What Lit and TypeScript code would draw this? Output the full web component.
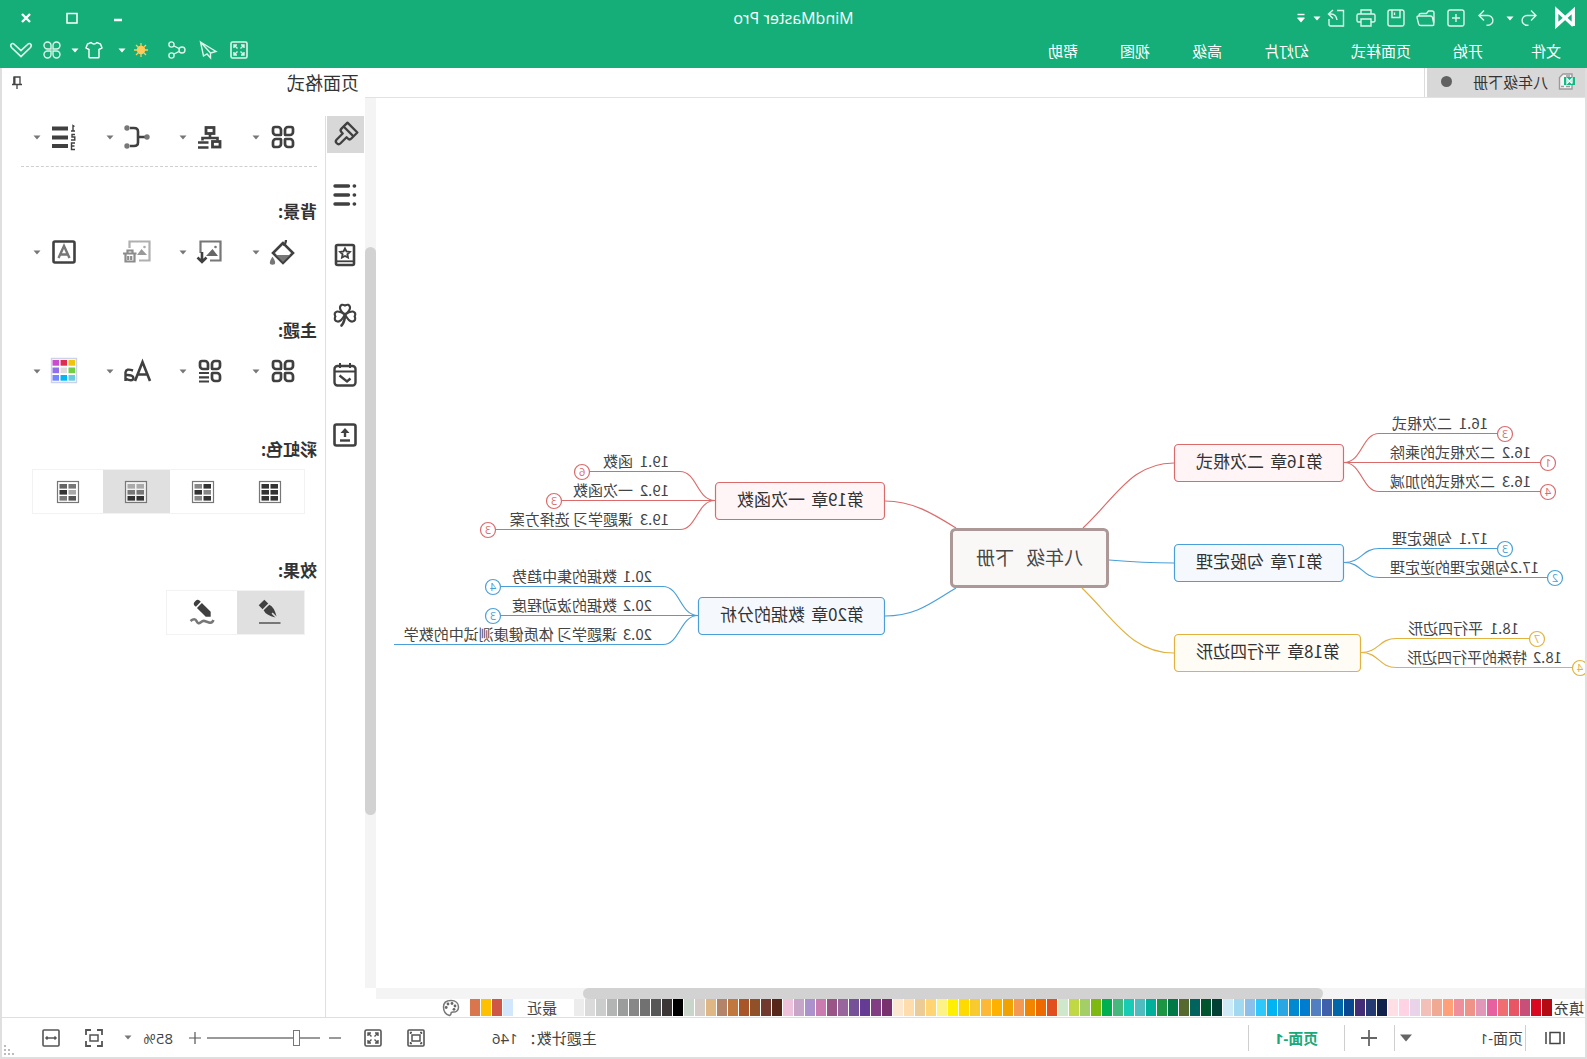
import { LitElement, html, svg, css } from "lit";
import { customElement, state } from "lit/decorators.js";
import { classMap } from "lit/directives/class-map.js";
import { styleMap } from "lit/directives/style-map.js";

const FILL_COLORS = `b40a14 d80920 c84f77 e85665 ee6e71 e761a0 e097b8 ef9388 ef8f9b ffa078
f0aa94 f3bfb9 e9d3e8 ffd2e4 ffdee4 10214b 253a72 432c78 084890 0068a8
3f61ac 527fc2 007dcf 0089d0 2aa6e3 00b4f3 2fc8fb 8cc0eb a0d9f0 cdeaf6
023f34 00552f 00635e 56692f 007946 1d9643 00b09a 51bcc0 17cbb5 47b87d
00b050 7eb90f a4cf66 bfd844 cfe8cb e14f1f ed6a00 f28500 f39951 f0a300
ffb100 fdb836 f9c930 ffda00 ffef00 fdf285 ffd473 ebcc97 ffdcab fce8d0
793170 823e83 643c93 755197 98659c 9a5587 ca7baf ab92cd c7a5c8 edc2da
57271a 723a2f 925028 a85527 c0783e b3846a dfb785 d5cbc6 c9d4cb 000000
3d3636 585757 717171 878787 9b9d9c b2b5b3 cbcccc dadada ececec`.split(/\s+/);
const RECENT_COLORS = ["d2e7fb", "cf5748", "ffc000", "d9764d"];

/* ---------- icons ---------- */

const leafSquare = (x: number, y: number, tl: number, tr: number, br: number, bl: number, s = 8) => {
  return `M${x + tl} ${y}H${x + s - tr}${tr ? `a${tr} ${tr} 0 0 1 ${tr} ${tr}` : ""}V${y + s - br}${br ? `a${br} ${br} 0 0 1 ${-br} ${br}` : ""}H${x + bl}${bl ? `a${bl} ${bl} 0 0 1 ${-bl} ${-bl}` : ""}V${y + tl}${tl ? `a${tl} ${tl} 0 0 1 ${tl} ${-tl}` : ""}Z`;
};
const fourLeaves = [
  leafSquare(2, 2, 2, 3, 0.5, 3),
  leafSquare(14, 2, 3, 2, 3, 0.5),
  leafSquare(2, 14, 3, 0.5, 3, 2),
  leafSquare(14, 14, 0.5, 3, 2, 3),
];
const cells = (c: string[]) =>
  svg`<rect x="1.500" y="1.500" width="21" height="21" fill="#fff" fill-opacity=".5" stroke="#777" stroke-width="1.200"/>
  ${c.map((f, i) => svg`<rect x=${i % 2 ? 13 : 4} y=${4 + Math.floor(i / 2) * 6} width="7.500" height="4.600" fill=${f} stroke="none"/>`)}`;
const SWATCH9 = ["f0c40c", "dc2e55", "c94bce", "70cf44", "dcdcdc", "8f70ea", "68cbe0", "00b6f5", "7486ff"];

const ICONS: Record<string, [number, number, unknown]> = {
  logo: [20, 18, svg`<path d="M1.700 17V1.500L18.300 16.500V1L1.700 16.500" fill="none" stroke="#fff" stroke-width="3.300"/>`],
  undo: [16, 16, svg`<path d="M6 .5 1 5.500l5 5M1.500 5.500h8.500a4.900 4.900 0 0 1 0 9.800H8.500"/>`],
  redo: [16, 16, svg`<path d="M10 .5l5 5-5 5M14.500 5.500H6a4.900 4.900 0 0 0 0 9.800h1.500"/>`],
  newFile: [18, 18, svg`<rect x="1" y="1" width="16" height="16" rx="2"/><path d="M9 5v8M5 9h8"/>`],
  open: [20, 18, svg`<path d="M2 14V4q0-2 2-2h3.500l2 2.500H15q2 0 2 2V7M2 15.500 3.500 8.500Q4 7 5.500 7H17.500q1.800 0 1.400 1.800l-1.500 6Q17 16.500 15 16.500H3.500Q2 16.500 2 15"/>`],
  save: [18, 18, svg`<rect x="1" y="1" width="16" height="16" rx="2"/><path d="M5 1v7.500h8V1M10.500 3.500v2.500"/>`],
  print: [20, 18, svg`<path d="M5 5V1h10v4M5 13H2.500Q1 13 1 11.500V6.500Q1 5 2.500 5h15Q19 5 19 6.500v5q0 1.500-1.500 1.500H15M5 10h10v7H5z"/>`],
  share: [18, 18, svg`<path d="M8 1.500H1.500v15.500h13q1.500 0 1.500-2v-5M12 1l4.500 4L12 9.500M16 5h-2q-5 0-6 6"/>`],
  caret: [8, 5, svg`<path d="M0.500 0.500h7L4 4.500z" fill="currentColor" stroke="none"/>`],
  overflow: [8, 10, svg`<path d="M.5 1.500h7" stroke-width="1.400"/><path d="M.5 4.500h7v1L4 9.500.5 5.500z" fill="currentColor" stroke="none"/>`],
  min: [10, 10, svg`<path d="M1 7h8" stroke-width="2.500"/>`],
  max: [12, 12, svg`<path d="M1 1.500h10V11H1z" stroke-width="1.500"/>`],
  close: [12, 12, svg`<path d="M2 2l8 8M10 2l-8 8" stroke-width="2.400"/>`],
  full: [18, 18, svg`<rect x="1" y="1" width="16" height="16" rx="1.500" stroke-width="1.600"/><path d="M4 7V4h3M11 4h3v3M14 11v3h-3M7 14H4v-3M4 4l3.500 3.500M14 4l-3.500 3.500M14 14l-3.500-3.500M4 14l3.500-3.500"/>`],
  plane: [18, 18, svg`<path d="M16.500 1 1 10.500l5.500 1.500v5l3.500-4 3.500 2zM16.500 1 6.500 12"/>`],
  nodes: [18, 18, svg`<circle cx="4" cy="9" r="3"/><circle cx="14.500" cy="3.500" r="2.600"/><circle cx="14.500" cy="14.500" r="2.600"/><path d="M6.700 7.700 12 5M6.700 10.300 12 13"/>`],
  sun: [16, 16, svg`<circle cx="8" cy="8" r="4.200" fill="#ffcb5c" stroke="none"/><path d="M8 1v14M1 8h14M3 3l10 10M13 3 3 13" stroke="#ffcb5c" stroke-width="1.300"/>`],
  shirt: [18, 18, svg`<path d="M6 1.500Q9 4.500 12 1.500L15.500 3l1.500 4-3 1.500V16q0 .8-.8.8H4.800Q4 16.800 4 16V8.500L1 7l1.500-4z"/>`],
  petals: [18, 18, svg`<path d="M8 8H4.500A3.500 3.500 0 1 1 8 4.500zM10 8V4.500A3.500 3.500 0 1 1 13.500 8zM8 10v3.500A3.500 3.500 0 1 1 4.500 10zM10 10h3.500a3.500 3.500 0 1 1-3.500 3.500z"/>`],
  chevron: [24, 16, svg`<path d="M2 2.500Q3.500.5 5.500 2.500L12 8.500 18.500 2.500Q20.500.5 22 2.500 22.800 4 21.500 5.500L12 14.500 2.500 5.500Q1.200 4 2 2.500z" stroke-width="1.700"/>`],
  doc: [16, 17, svg`<path d="M3 1h9L15.500 4.500V16H3z" fill="#f4f4f4" stroke="#9a9a9a"/><path d="M5 13.500h4M11 13.500h3M5 3h4" stroke="#9a9a9a"/><path d="M0 4h11v8H0z" fill="#12b886" stroke="none"/><path d="M3 10.500V5.500l5 5v-5l-5 5" stroke="#fff" stroke-width="1.300"/>`],
  pin: [10, 14, svg`<path d="M2 8V1h6v7M0 8.500h10M5 9v4" stroke-width="1.300"/><path d="M7.500 1v7" stroke-width="2"/>`],
  brush: [26, 26, svg`<g transform="rotate(-45 13 13)" stroke-width="2.300"><path d="M6 2.500h14V11q0 2.500-2.500 2.500h-1.800V22a2.700 2.700 0 0 1-5.400 0v-8.500H8.500Q6 13.500 6 11z" stroke-linejoin="round"/><path d="M6 8h14"/></g>`],
  list: [24, 24, svg`<path d="M8.500 3H22M8.500 12H22M8.500 21H22" stroke-width="3.400" stroke-linecap="round"/><path d="M2.500 3h.2M2.500 12h.2M2.500 21h.2" stroke-width="3.600" stroke-linecap="round"/>`],
  album: [22, 24, svg`<rect x="2" y="2" width="18" height="20" rx="1.500" stroke-width="2.600"/><path d="M2 18.300h18" stroke-width="1.800"/><path d="M11 5.500l1.500 3 3.300.5-2.400 2.300.6 3.300L11 13l-3 1.600.6-3.300L6.200 9l3.300-.5z" stroke-width="1.900"/>`],
  clover: [24, 24, svg`<path d="M12 11.500Q6.500 7.500 7 4 8 .5 12 2.500 16 .5 17 4q.5 3.500-5 7.500zM12 11.500Q8 19 4.500 18.500.5 17.500 2.300 13.500.5 9.500 4.200 8.500q3.300-.3 7.800 3zM12 11.500q4 7.500 7.500 7Q23.500 17.500 21.700 13.500q1.800-4-1.900-5-3.300-.3-7.800 3z" stroke-width="2.200"/><path d="M12 11q0 8 3.500 11.500" stroke-width="2.600" stroke-linecap="round"/>`],
  calendar: [24, 24, svg`<rect x="1.500" y="3" width="21" height="19.500" rx="3" stroke-width="2.400"/><path d="M2 8.500h20" stroke-width="2"/><path d="M7 0v5M17 0v5" stroke-width="2"/><path d="M17.500 12.500 10 18.500 6.500 15.500" stroke-width="2.400"/>`],
  upload: [24, 24, svg`<rect x="1.500" y="1.500" width="21" height="21" rx="2" stroke-width="2.600"/><path d="M7 17.500h10" stroke-width="2.400"/><path d="M12 14V9" stroke-width="2.400"/><path d="M12 5l4.500 5h-9z" fill="currentColor" stroke="none"/>`],
  leaves: [24, 24, svg`${fourLeaves.map((d) => svg`<path d=${d} stroke-width="2.700"/>`)}`],
  themeList: [24, 24, svg`${fourLeaves.slice(0, 3).map((d) => svg`<path d=${d} stroke-width="2.700"/>`)}<path d="M13 14h10M13 18.300h10M13 22.500h10" stroke-width="2.200"/>`],
  orgchart: [24, 24, svg`<rect x="8" y="2.500" width="8" height="6" stroke-width="2.800"/><path d="M12 9v4M4.500 15.500v-2.500h15v2.500" stroke-width="2.600"/><rect x="2" y="16.500" width="7.500" height="5.500" stroke-width="2.800"/><path d="M13.500 17.500H24M13.500 22.500H24" stroke-width="2.400"/>`],
  bracket: [26, 24, svg`<path d="M4 12h7M20 3h-4q-4 0-4 3.500v11q0 3.500 4 3.500h4" stroke-width="2.600"/><g fill="#777" stroke="none"><circle cx="3" cy="12" r="2.700"/><circle cx="23" cy="3" r="2.700"/><circle cx="23" cy="21" r="2.700"/></g>`],
  numbered: [24, 26, svg`<path d="M8 4.500h16M8 13.500h16M8 22h16" stroke-width="3.800"/><path d="M1.500 2.500 3 1.500V7M1 7h4M1 10.500h3v2.500H1.200v3H5M1 19h3.500v6.500H1M1.500 22h3" stroke-width="1.400"/>`],
  bucket: [25, 25, svg`<path d="M12 3 22 13 12 23 2 13z" stroke-width="2.600"/><path d="M9 0q0 4 3 5" stroke-width="2.200"/><path d="M5 15h14l-7 7z" fill="#777" stroke="none"/><path d="M22.500 18q4 6 0 6t0-6z" fill="#777" stroke="#777"/>`],
  imageIn: [25, 24, svg`<path d="M12 20.500H1.500v-19h20V13" stroke="#777" stroke-width="2.200"/><path d="M4 16l5.500-7L16 16z" fill="#666" stroke="none"/><circle cx="6.500" cy="7" r="1.300" fill="#777" stroke="none"/><path d="M20 12v9M15.500 17.500 20 22l4.500-4.500" stroke-width="2.600"/>`],
  imageDel: [28, 24, svg`<path d="M12 20.500H1.500v-19h20V8" stroke="#b0b0b0" stroke-width="2.200"/><path d="M4 15l5.500-6L14 15z" fill="#999" stroke="none"/><circle cx="6.500" cy="7" r="1.300" fill="#aaa" stroke="none"/><path d="M14.500 13.500H28M18.500 13v-2.500h5V13M16.500 14v7.500h9V14M19.800 16v4M22.800 16v4" stroke="#8c8c8c" stroke-width="2.200"/>`],
  letterBox: [24, 24, svg`<rect x="1.500" y="1.500" width="21" height="21" rx="1.500" stroke-width="2.600"/><path d="M6.500 18 12 6l5.500 12M8.500 14.500h7" stroke="#777" stroke-width="2.400"/>`],
  font: [28, 22, svg`<path d="M1 21 8.500 2 16 21M3.800 14.500h9.500" stroke-width="2.600"/><path d="M18 10.500q7-2.500 7.500 2V21M25.500 15q-8-.5-8 3.200 1 4 8 .3" stroke-width="2.400"/>`],
  colors: [26, 26, svg`<path d="M.5.5h25v24H.5z" fill="#fff" stroke="#ccd3e8"/>${SWATCH9.map((c, i) => svg`<rect x=${2 + (i % 3) * 8} y=${2 + Math.floor(i / 3) * 7.5} width="6.500" height="5.700" fill=${"#" + c} stroke="none"/>`)}`],
  rain1: [24, 24, cells(["#333", "#333", "#333", "#333", "#333", "#333"])],
  rain2: [24, 24, cells(["#333", "#888", "#888", "#333", "#333", "#888"])],
  rain3: [24, 24, cells(["#aaa", "#aaa", "#777", "#777", "#333", "#333"])],
  rain4: [24, 24, cells(["#777", "#666", "#aaa", "#333", "#555", "#777"])],
  pen: [24, 24, svg`<g fill="currentColor" stroke="none" transform="rotate(45 12 10)"><path d="M8-2h8v5.500H8z"/><path d="M8 5h8q2 5-3.200 13.500V13h-1.600v5.500Q6 10 8 5z"/></g><path d="M1.500 22H23" stroke="#777" stroke-width="2"/>`],
  pencil: [26, 24, svg`<g fill="currentColor" stroke="none" transform="rotate(45 11 9)"><path d="M7.500 1V-1q0-2.500 3.500-2.500T14.500-1v2z"/><path d="M7.500 2.500h7V15L11 18.500 7.500 15z"/></g><path d="M1.500 19q1.500 3.500 4.500 2.500t4.500-1.500 4 1.500 4-1.500 6 0" stroke="#777" stroke-width="2.600"/>`],
  palette: [18, 18, svg`<path d="M9 1.500C4 1.500 1.500 4.500 1.500 8S4 13.500 7 13q2 0 2 1.500t1.500 2q6-1.500 6-8.500 0-6.500-7.500-6.500z" stroke="#777" stroke-width="1.500"/><g fill="#666" stroke="none"><circle cx="5" cy="7" r="1.400"/><circle cx="8" cy="4.500" r="1.400"/><circle cx="12" cy="5" r="1.400"/><circle cx="13.800" cy="8.500" r="1.400"/><circle cx="6" cy="10.300" r="1.400"/></g>`],
  pages: [20, 14, svg`<path d="M1 1v12M19 1v12M5 1.500h10v11H5z" stroke-width="1.500"/>`],
  plus16: [16, 16, svg`<path d="M8 0v16M0 8h16" stroke-width="1.800"/>`],
  plus12: [12, 12, svg`<path d="M6 0v12M0 6h12" stroke-width="1.200"/>`],
  minus12: [12, 12, svg`<path d="M0 6h12" stroke-width="1.200"/>`],
  fitPage: [18, 18, svg`<rect x="1" y="1" width="16" height="16" rx="1" stroke-width="1.600"/><rect x="5" y="6" width="8" height="6" stroke-width="1.500"/><path d="M3.500 5V3.500H5M13 3.500h1.500V5M14.500 13v1.500H13M5 14.500H3.500V13"/>`],
  fitSel: [18, 18, svg`<path d="M1 6V1h5M12 1h5v5M17 12v5h-5M6 17H1v-5" stroke-width="1.800"/><rect x="5" y="6" width="8" height="6" stroke-width="1.500"/>`],
  fitWidth: [18, 18, svg`<rect x="1" y="1" width="16" height="16" rx="1" stroke-width="1.600"/><path d="M4 9h10M5.500 7.500 4 9l1.500 1.500M12.500 7.500 14 9l-1.500 1.500" stroke-width="1.500"/>`],
  arrowDown: [12, 8, svg`<path d="M0 .5h12L6 7.500z" fill="#666" stroke="none"/>`],
  grip: [10, 10, svg`<g fill="#bbb" stroke="none"><path d="M8 0h2v2H8zM8 4h2v2H8zM4 4h2v2H4zM8 8h2v2H8zM4 8h2v2H4zM0 8h2v2H0z"/></g>`],
};

const icon = (name: string) => {
  const [w, h, body] = ICONS[name];
  return html`<svg class="icon" width=${w} height=${h} viewBox="0 0 ${w} ${h}" fill="none" stroke="currentColor" stroke-width="1.4" aria-hidden="true">${body}</svg>`;
};
const iconButton = (name: string, label: string, cls = "tool") =>
  html`<button class=${cls} aria-label=${label}>${icon(name)}</button>`;

/* ---------- mind map ---------- */

interface Leaf { no: string; title: string; x: number; y: number; gap: number; count?: number; end: number }
interface Chapter { label: string; title: string; x: number; y: number; w: number; side: -1 | 1; tone: string; root: string; leaves: Leaf[] }

const CHAPTERS: Chapter[] = [
  { label: "第16章", title: "二次根式", x: 243, y: 463, w: 170, side: -1, tone: "red", root: "M504 528C470 496 455 463 413 463", leaves: [
    { no: "16.1", title: "二次根式", x: 99, y: 434, gap: 36, count: 3, end: 82 },
    { no: "16.2", title: "二次根式的乘除", x: 56, y: 463, gap: 36, count: 1, end: 39 },
    { no: "16.3", title: "二次根式的加减", x: 56, y: 492, gap: 36, count: 4, end: 39 } ] },
  { label: "第17章", title: "勾股定理", x: 243, y: 563, w: 170, side: -1, tone: "blue", root: "M478 560C455 562 440 563 413 563", leaves: [
    { no: "17.1", title: "勾股定理", x: 99, y: 549, gap: 36, count: 3, end: 82 },
    { no: "17.2", title: "勾股定理的逆定理", x: 48, y: 578, gap: 29, count: 2, end: 32 } ] },
  { label: "第18章", title: "平行四边形", x: 226, y: 653, w: 187, side: -1, tone: "gold", root: "M505 588C472 620 455 653 413 653", leaves: [
    { no: "18.1", title: "平行四边形", x: 68, y: 639, gap: 36, count: 7, end: 50 },
    { no: "18.2", title: "特殊的平行四边形", x: 25, y: 668, gap: 35, count: 4, end: 7 } ] },
  { label: "第19章", title: "一次函数", x: 702, y: 501, w: 170, side: 1, tone: "red", root: "M631 528C655 513 675 501 702 501", leaves: [
    { no: "19.1", title: "函数", x: 918, y: 472, gap: 36, count: 6, end: 1005 },
    { no: "19.2", title: "一次函数", x: 918, y: 501, gap: 36, count: 3, end: 1033 },
    { no: "19.3", title: "课题学习 选择方案", x: 918, y: 530, gap: 36, count: 3, end: 1099 } ] },
  { label: "第20章", title: "数据的分析", x: 702, y: 616, w: 187, side: 1, tone: "blue", root: "M631 588C655 602 670 616 702 616", leaves: [
    { no: "20.1", title: "数据的集中趋势", x: 935, y: 587, gap: 35, count: 4, end: 1094 },
    { no: "20.2", title: "数据的波动程度", x: 935, y: 616, gap: 35, count: 3, end: 1094 },
    { no: "20.3", title: "课题学习 体质健康测试中的数学", x: 935, y: 645, gap: 35, end: 1193 } ] },
];

const drawChapter = (c: Chapter) => {
  const edge = c.side < 0 ? c.x : c.x + c.w;
  return svg`<g class=${c.tone}>
    <path class="line" d=${c.root}></path>
    ${c.leaves.map((l) => {
      const bend = edge + c.side * 35;
      const mid = edge + c.side * 18;
      const stop = l.count ? l.end - c.side * 8 : l.end;
      return svg`<path class="line" d="M${edge} ${c.y - 0.5}C${mid} ${c.y - 0.5} ${mid} ${l.y - 0.5} ${bend} ${l.y - 0.5}H${stop}"></path>
        <text class="leaf" x=${l.x} y=${l.y - 5}>${l.no}<tspan x=${l.x + l.gap}>${l.title}</tspan></text>
        ${l.count ? svg`<circle class="badge" cx=${l.end} cy=${l.y} r="7.500"></circle><text class="count" x=${l.end} y=${l.y + 4}>${l.count}</text>` : ""}`;
    })}
    <rect class="box" x=${c.x + 0.5} y=${c.y - 18.5} width=${c.w - 1} height="37" rx="4"></rect>
    <text class="chapter" x=${c.x + 21} y=${c.y + 5}>${c.label}<tspan x=${c.x + 80}>${c.title}</tspan></text>
  </g>`;
};

const MENUS = ["文件", "开始", "页面样式", "幻灯片", "高级", "视图", "帮助"];
const SIDE_TABS: [string, string][] = [["brush", "页面格式"], ["list", "大纲"], ["album", "图标"], ["clover", "剪贴画"], ["calendar", "任务"], ["upload", "导出"]];

@customElement("app-root")
export class AppRoot extends LitElement {
  @state() private rainbow = 2;
  @state() private effect = 0;
  @state() private sideTab = 0;

  static styles = css`
    :host { display: block; color: #444; font: 15px/20px "Open Sans", "Noto Sans CJK SC", sans-serif; }
    * { box-sizing: border-box; }
    button, select, input { font: inherit; color: inherit; margin: 0; }
    button { display: flex; align-items: center; justify-content: center; flex: none; padding: 0; border: 0; background: none; }
    .icon { display: block; flex: none; overflow: visible; }

    /* the whole window is shown flipped left to right */
    .window { display: flex; flex-direction: column; min-height: 100vh; transform: scaleX(-1); background: #fff; overflow: hidden; }

    .header { background: #15ae79; color: #dcf5eb; }
    .titlebar { display: grid; grid-template-columns: 1fr auto 1fr; align-items: center; height: 36px; }
    .quick, .controls, .tools { display: flex; align-items: center; }
    .logo { display: flex; justify-content: center; width: 43px; }
    .tool { width: 30px; height: 30px; }
    .small { width: 8px; height: 30px; margin-right: 5px; color: #fff; }
    .overflow { width: 14px; height: 30px; color: #fff; }
    .title { margin: 0; font-size: 16px; font-weight: 400; color: #fff; }
    .controls { justify-content: flex-end; padding-right: 3px; color: #fff; }
    .control { width: 46px; height: 32px; }
    .menubar { display: flex; justify-content: space-between; height: 32px; padding: 0 6px 4px 20px; }
    .menus { display: flex; color: #fff; }
    .menu { padding: 2px 21px 0; }
    .menu:first-child { padding: 2px 27px 0 6px; }
    .tools .tool { width: 31px; }
    .split { display: flex; gap: 2px; margin: 0 3px 0 8px; color: #fff; }
    .split .icon:first-child { width: 26px; }

    .frame { display: flex; flex-direction: column; flex: 1; border: solid #dfdfdf; border-width: 0 2px 2px; }
    .body { display: grid; grid-template-columns: minmax(0, 1fr) 363px; flex: 1; border-bottom: 1px solid #dfdfdf; }
    .main { display: flex; flex-direction: column; }
    .tabs { display: flex; height: 30px; border-bottom: 1px solid #e2e2e2; }
    .tab { display: flex; gap: 11px; width: 158px; padding: 0 14px 2px 10px; background: #d8d8d8; color: #333; justify-content: flex-start; }
    .tabs::after { content: ""; width: 2px; border-right: 1px solid #dcdcdc; }
    .dot { width: 11px; height: 11px; margin-left: 10px; border-radius: 50%; background: #616161; }
    .stage { display: grid; grid-template-columns: minmax(0, 1fr) 11px; flex: 1; }
    .canvas { position: relative; overflow: hidden; }
    .map { position: absolute; left: 0; top: 0; width: 100%; height: 100%; }
    .vbar { background: #f4f4f4; padding-top: 149px; }
    .vthumb { height: 568px; border-radius: 6px; background: #d2d2d2; }
    .hbar { height: 11px; margin-right: 11px; padding-left: 262px; background: #f4f4f4; }
    .hthumb { width: 740px; height: 11px; border-radius: 6px; background: #d2d2d2; }
    .palette { display: flex; align-items: center; height: 18px; }
    .swatches { display: flex; gap: 1px; height: 17px; margin: 0 0 1px 2px; }
    .swatch { width: 10px; height: 17px; }
    .plabel { margin-left: 1px; white-space: nowrap; }
    .recent { margin: 0 12px 0 17px; }
    .palette .tool { width: 18px; height: 18px; margin-left: 10px; }

    .line { fill: none; stroke: var(--tone); stroke-width: 1.2; }
    .box { fill: var(--soft); stroke: var(--tone); stroke-width: 1.2; }
    .badge { fill: #fff; stroke: var(--tone); stroke-width: 1.2; }
    .red { --tone: #db6b6b; --soft: #fff5f6; }
    .blue { --tone: #4b9fd8; --soft: #f5f9fe; }
    .gold { --tone: #e2b241; --soft: #fffcf5; }
    .leaf { font: 15px "Noto Sans CJK SC", sans-serif; fill: #444; }
    .chapter { font: 17px "Noto Sans CJK SC", sans-serif; fill: #333; }
    .count { font: 11px "Open Sans", sans-serif; fill: var(--tone); text-anchor: middle; }
    .root { fill: #faf8f7; stroke: #ac9896; stroke-width: 3; }
    .roottext { font: 19px "Noto Sans CJK SC", sans-serif; fill: #484848; }

    .panel { display: flex; flex-direction: column; }
    .panelhead { display: flex; align-items: center; justify-content: space-between; height: 30px; padding: 0 10px 0 6px; }
    .paneltitle { margin: 0; font-size: 18px; font-weight: 400; color: #333; }
    .pin { width: 10px; height: 30px; }
    .panelbody { display: flex; flex: 1; margin-top: 18px; }
    .side { display: flex; flex: none; flex-direction: column; gap: 23px; width: 40px; padding-left: 1px; border-right: 1px solid #dfdfdf; color: #404040; }
    .sidetab { width: 37px; height: 37px; }
    .sidetab.on { background: #d8d8d8; }
    .content { flex: 1; min-width: 0; padding: 0 19px 0 8px; color: #404040; }
    .row { display: grid; grid-template-columns: repeat(3, 73px) 1fr; height: 50px; padding-left: 18px; align-items: center; }
    .first { height: 51px; padding-bottom: 8px; border-bottom: 1px dashed #cfcfcf; }
    .pick { justify-content: flex-start; height: 34px; }
    .pick .pic { display: flex; justify-content: center; width: 32px; }
    .pick .car { display: flex; margin-left: 7px; color: #777; }
    .heading { margin: 0; padding-top: 35px; height: 60px; font-size: 17px; line-height: 20px; font-weight: 700; color: #333; }
    .next { margin-top: 9px; }
    .group { display: flex; width: max-content; height: 45px; margin: 4px 0 0 12px; border: 1px solid #f2f2f2; }
    .option { width: 67px; height: 43px; }
    .option.on { background: #e0e0e0; }
    .option:last-child { width: 70px; }
    .aftergroup { margin-top: 12px; }

    .status { position: relative; display: flex; align-items: center; height: 39px; color: #444; }
    .rule { width: 1px; height: 26px; background: #cfcfcf; }
    .pages { width: 59px; height: 26px; }
    .pagepick { position: relative; display: flex; align-items: center; width: 130px; }
    .select { width: 130px; height: 26px; padding: 0 2px; border: 0; background: none; appearance: none; }
    .pagepick .icon { position: absolute; right: 5px; pointer-events: none; }
    .add { width: 49px; height: 26px; color: #666; }
    .pagetab { width: 95px; height: 26px; font-weight: 700; color: #1ba878; }
    .right { display: flex; align-items: center; margin-left: auto; padding-right: 28px; }
    .countlabel { margin-right: 54px; }
    .view { width: 43px; height: 30px; color: #555; }
    .step { width: 16px; height: 30px; color: #555; }
    .minus { margin-left: 9px; }
    .slider { width: 113px; height: 18px; margin: 0 4px 0 7px; appearance: none; background: linear-gradient(#999, #999) center / 100% 2px no-repeat; }
    .slider::-webkit-slider-thumb { appearance: none; width: 7px; height: 16px; border: 1px solid #777; background: #fff; }
    .zoom { display: flex; gap: 11px; width: 57px; margin-left: 14px; justify-content: flex-start; }
    .zoom .icon { color: #777; }
    .grip { position: absolute; right: 2px; bottom: 2px; }
  `;

  private pick(name: string, label: string, caret = true) {
    return html`<button class="pick" aria-label=${label}><span class="pic">${icon(name)}</span>${caret ? html`<span class="car">${icon("caret")}</span>` : ""}</button>`;
  }

  private option(name: string, label: string, on: boolean, choose: () => void) {
    return html`<button class=${classMap({ option: true, on })} aria-label=${label} aria-pressed=${on} @click=${choose}>${icon(name)}</button>`;
  }

  private swatch(c: string) {
    return html`<button class="swatch" aria-label=${"#" + c} style=${styleMap({ background: "#" + c })}></button>`;
  }

  private header() {
    return html`<header class="header">
      <div class="titlebar">
        <div class="quick">
          <span class="logo">${icon("logo")}</span>
          ${iconButton("undo", "撤销")}${iconButton("caret", "撤销选项", "small")}
          ${iconButton("redo", "恢复")}${iconButton("newFile", "新建")}${iconButton("open", "打开")}
          ${iconButton("save", "保存")}${iconButton("print", "打印")}${iconButton("share", "导出")}
          ${iconButton("caret", "导出选项", "small")}${iconButton("overflow", "自定义", "overflow")}
        </div>
        <h1 class="title">MindMaster Pro</h1>
        <div class="controls">
          ${iconButton("min", "最小化", "control")}${iconButton("max", "最大化", "control")}${iconButton("close", "关闭", "control")}
        </div>
      </div>
      <div class="menubar">
        <nav class="menus">${MENUS.map((m) => html`<button class="menu">${m}</button>`)}</nav>
        <div class="tools">
          ${iconButton("full", "全屏")}${iconButton("plane", "发送")}${iconButton("nodes", "分享")}
          <button class="split" aria-label="亮度">${icon("sun")}${icon("caret")}</button>
          <button class="split" aria-label="皮肤">${icon("shirt")}${icon("caret")}</button>
          ${iconButton("petals", "应用")}${iconButton("chevron", "收起")}
        </div>
      </div>
    </header>`;
  }

  private panel() {
    return html`<aside class="panel">
      <div class="panelhead"><h2 class="paneltitle">页面格式</h2>${iconButton("pin", "固定", "pin")}</div>
      <div class="panelbody">
        <div class="side">
          ${SIDE_TABS.map(([n, label], i) => html`<button class=${classMap({ sidetab: true, on: this.sideTab === i })} aria-label=${label} @click=${() => (this.sideTab = i)}>${icon(n)}</button>`)}
        </div>
        <div class="content">
          <div class="row first">${this.pick("leaves", "布局")}${this.pick("orgchart", "结构")}${this.pick("bracket", "连线")}${this.pick("numbered", "编号")}</div>
          <h3 class="heading">背景:</h3>
          <div class="row">${this.pick("bucket", "背景颜色")}${this.pick("imageIn", "背景图片")}${this.pick("imageDel", "移除图片", false)}${this.pick("letterBox", "水印")}</div>
          <h3 class="heading next">主题:</h3>
          <div class="row">${this.pick("leaves", "主题")}${this.pick("themeList", "主题样式")}${this.pick("font", "字体")}${this.pick("colors", "主题颜色")}</div>
          <h3 class="heading next">彩虹色:</h3>
          <div class="group">
            ${["rain1", "rain2", "rain3", "rain4"].map((n, i) => this.option(n, `彩虹色 ${i + 1}`, this.rainbow === i, () => (this.rainbow = i)))}
          </div>
          <h3 class="heading aftergroup">效果:</h3>
          <div class="group">
            ${["pen", "pencil"].map((n, i) => this.option(n, `效果 ${i + 1}`, this.effect === i, () => (this.effect = i)))}
          </div>
        </div>
      </div>
    </aside>`;
  }

  private status() {
    return html`<footer class="status">
      ${iconButton("pages", "页面列表", "pages")}<i class="rule"></i>
      <span class="pagepick"><select class="select" aria-label="页面"><option>页面-1</option></select>${icon("arrowDown")}</span>
      <i class="rule"></i>${iconButton("plus16", "添加页面", "add")}<i class="rule"></i>
      <button class="pagetab">页面-1</button><i class="rule"></i>
      <div class="right">
        <span class="countlabel">主题计数： 146</span>
        ${iconButton("fitPage", "适合页面", "view")}${iconButton("full", "全屏", "view")}
        ${iconButton("minus12", "缩小", "step minus")}
        <input class="slider" type="range" min="0" max="450" value="85" aria-label="缩放" />
        ${iconButton("plus12", "放大", "step")}
        <button class="zoom">85%${icon("caret")}</button>
        ${iconButton("fitSel", "适合选择", "view")}${iconButton("fitWidth", "适合宽度", "view")}
      </div>
      <span class="grip">${icon("grip")}</span>
    </footer>`;
  }

  render() {
    return html`<div class="window">
      ${this.header()}
      <div class="frame">
        <div class="body">
          <main class="main">
            <div class="tabs"><button class="tab">${icon("doc")}<span>八年级下册</span><span class="dot"></span></button></div>
            <div class="stage">
              <div class="canvas">
                <svg class="map" role="img" aria-label="八年级 下册">
                  <g transform="translate(-2 -98)">
                    ${CHAPTERS.map(drawChapter)}
                    <rect class="root" x="479.5" y="529.5" width="156" height="57" rx="4"></rect>
                    <text class="roottext" x="504" y="565">八年级<tspan x="573">下册</tspan></text>
                  </g>
                </svg>
              </div>
              <div class="vbar"><div class="vthumb"></div></div>
            </div>
            <div class="hbar"><div class="hthumb"></div></div>
            <div class="palette">
              <span class="plabel">填充</span>
              <div class="swatches">${FILL_COLORS.map((c) => this.swatch(c))}</div>
              <span class="recent">最近</span>
              <div class="swatches">${RECENT_COLORS.map((c) => this.swatch(c))}</div>
              ${iconButton("palette", "更多颜色")}
            </div>
          </main>
          ${this.panel()}
        </div>
        ${this.status()}
      </div>
    </div>`;
  }
}
